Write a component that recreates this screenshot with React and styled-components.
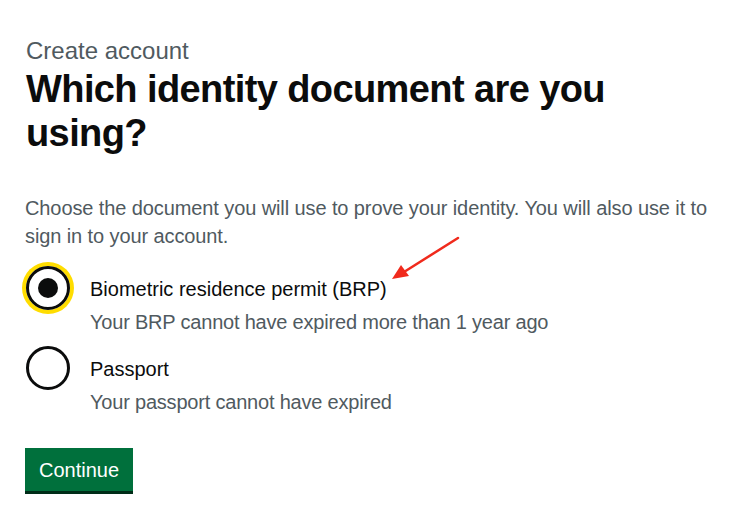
import styled, { createGlobalStyle } from 'styled-components';

const GlobalStyle = createGlobalStyle`
  body {
    margin: 0;
    background: #ffffff;
    font-family: "Liberation Sans", Arial, sans-serif;
    color: #0b0c0c;
  }
`;

const Page = styled.main`
  position: relative;
  width: 747px;
  height: 525px;
  padding: 36px 0 0 26px;
  box-sizing: border-box;
`;

const Caption = styled.span`
  display: block;
  font-size: 24px;
  line-height: 30px;
  color: #505a5f;
`;

const Heading = styled.h1`
  margin: 1px 0 0;
  font-size: 38px;
  line-height: 44px;
  font-weight: 700;
  letter-spacing: -0.6px;
  max-width: 640px;
`;

const Hint = styled.p`
  margin: 39px 0 0 -1px;
  font-size: 20px;
  line-height: 28px;
  color: #505a5f;
  letter-spacing: -0.1px;
  max-width: 700px;
`;

const Radios = styled.div`
  display: flex;
  flex-direction: column;
  gap: 11px;
  margin-top: 16px;
`;

const Item = styled.label`
  display: grid;
  grid-template-columns: 44px 1fr;
  column-gap: 20px;
  align-items: start;
`;

const Circle = styled.span`
  width: 44px;
  height: 44px;
  box-sizing: border-box;
  border: 3px solid #0b0c0c;
  border-radius: 50%;
  display: flex;
  align-items: center;
  justify-content: center;
  box-shadow: ${p => (p.$focused ? '0 0 0 4px #ffdd00' : 'none')};

  &::after {
    content: '';
    display: ${p => (p.$checked ? 'block' : 'none')};
    width: 20px;
    height: 20px;
    border-radius: 50%;
    background: #0b0c0c;
  }
`;

const Text = styled.span`
  display: flex;
  flex-direction: column;
  padding-top: 10px;
`;

const Label = styled.span`
  font-size: 20px;
  line-height: 26px;
`;

const ItemHint = styled.span`
  margin-top: 7px;
  font-size: 20px;
  line-height: 26px;
  color: #505a5f;
  letter-spacing: -0.2px;
`;

const Button = styled.button`
  align-self: flex-start;
  margin: 33px 0 0 -1px;
  padding: 9px 14px 8px;
  border: 0;
  background: #00703c;
  color: #ffffff;
  font-family: inherit;
  font-size: 20px;
  line-height: 26px;
  box-shadow: 0 3px 0 #002d18;
  cursor: pointer;
`;

const Arrow = styled.svg`
  position: absolute;
  left: 388px;
  top: 234px;
`;

const options = [
  {
    label: 'Biometric residence permit (BRP)',
    hint: 'Your BRP cannot have expired more than 1 year ago',
    checked: true,
  },
  { label: 'Passport', hint: 'Your passport cannot have expired', checked: false },
];

export default function App() {
  return (
    <>
      <GlobalStyle />
      <Page>
        <Caption>Create account</Caption>
        <Heading>Which identity document are you using?</Heading>
        <Hint>
          Choose the document you will use to prove your identity. You will also use it to sign
          in to your account.
        </Hint>
        <Radios>
          {options.map(o => (
            <Item key={o.label}>
              <Circle $checked={o.checked} $focused={o.checked} />
              <Text>
                <Label>{o.label}</Label>
                <ItemHint>{o.hint}</ItemHint>
              </Text>
            </Item>
          ))}
        </Radios>
        <Button>Continue</Button>
        <Arrow width="74" height="50" viewBox="0 0 74 50">
          <path d="M70 4 L16 38" stroke="#f02a1c" strokeWidth="2.5" strokeLinecap="round" />
          <path d="M4 45 L13 31 L21 42 Z" fill="#f02a1c" />
        </Arrow>
      </Page>
    </>
  );
}
